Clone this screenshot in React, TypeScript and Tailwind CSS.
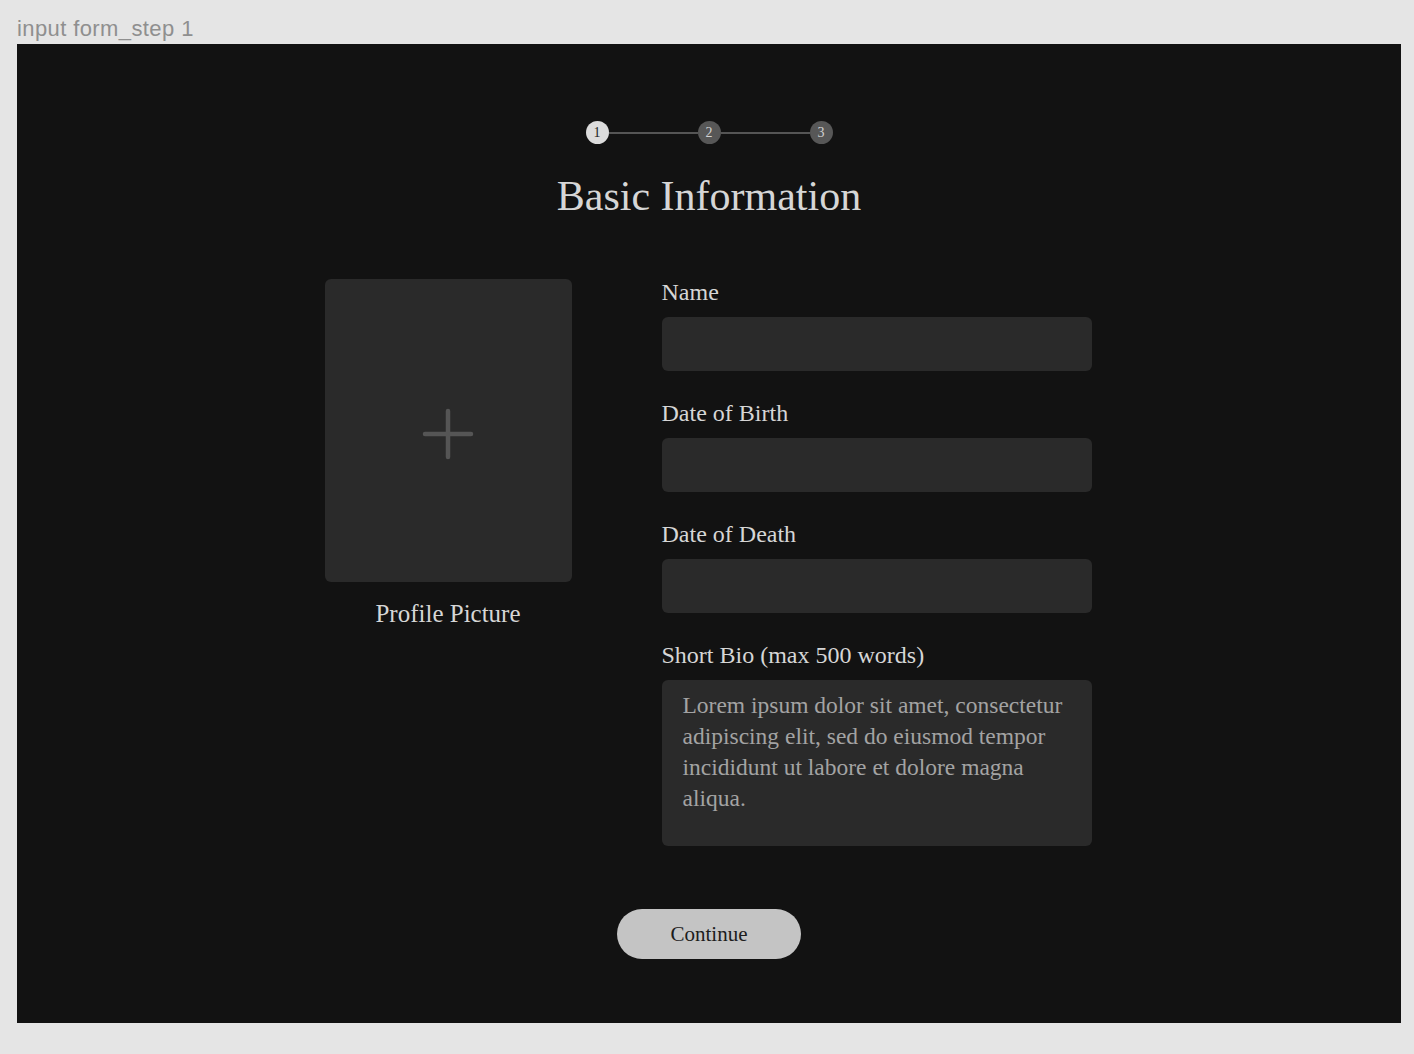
import React from "react";

const serif = { fontFamily: '"Liberation Serif", "Times New Roman", serif' };

function Step({ n, active }: { n: number; active?: boolean }) {
  return (
    <div
      className={
        "flex h-[23px] w-[23px] shrink-0 items-center justify-center rounded-full text-[14px] leading-none " +
        (active ? "bg-[#dcdcdc] text-[#1e1e1e]" : "bg-[#575757] text-[#d2d2d2]")
      }
      style={serif}
    >
      {n}
    </div>
  );
}

function Field({ label }: { label: string }) {
  return (
    <div className="flex flex-col">
      <div className="text-[24px] leading-[30px] text-[#d6d6d6]" style={serif}>
        {label}
      </div>
      <div className="mt-[10px] h-[54px] w-[430px] rounded-[6px] bg-[#2a2a2a]" />
    </div>
  );
}

export default function App() {
  return (
    <div className="min-h-[1054px] w-[1414px] bg-[#e5e5e5] pl-[17px] pt-[17px]">
      <div
        className="mb-[3px] text-[22px] leading-[24px] tracking-[0.4px] text-[#8f8f8f]"
        style={{ fontFamily: '"Liberation Sans", Arial, sans-serif' }}
      >
        input form_step 1
      </div>
      <div className="flex h-[979px] w-[1384px] flex-col items-center bg-[#121212] pt-[77px]">
        {/* stepper */}
        <div className="flex items-center">
          <Step n={1} active />
          <div className="h-[2px] w-[89px] bg-[#555555]" />
          <Step n={2} />
          <div className="h-[2px] w-[89px] bg-[#555555]" />
          <Step n={3} />
        </div>
        <h1 className="mt-[28px] text-[42px] leading-[48px] text-[#d6d6d6]" style={serif}>
          Basic Information
        </h1>

        <div className="mr-[2px] mt-[57px] flex items-start gap-[90px]">
          <div className="flex flex-col items-center pt-[2px]">
            <div className="flex h-[303px] w-[247px] items-center justify-center rounded-[6px] bg-[#2a2a2a] pt-[6px]">
              <svg width="52" height="52" viewBox="0 0 52 52">
                <path
                  d="M26 3 V49 M3 26 H49"
                  stroke="#555555"
                  strokeWidth="4.5"
                  strokeLinecap="round"
                  fill="none"
                />
              </svg>
            </div>
            <div className="mt-[17px] text-[25px] leading-[30px] text-[#d6d6d6]" style={serif}>
              Profile Picture
            </div>
          </div>

          <div className="flex flex-col gap-[27px]">
            <Field label="Name" />
            <Field label="Date of Birth" />
            <Field label="Date of Death" />
            <div className="flex flex-col">
              <div className="text-[24px] leading-[30px] text-[#d6d6d6]" style={serif}>
                Short Bio (max 500 words)
              </div>
              <div
                className="mt-[10px] h-[166px] w-[430px] rounded-[6px] bg-[#2a2a2a] pl-[21px] pt-[10px] text-[23.5px] leading-[31px] text-[#a3a3a3]"
                style={serif}
              >
                <div>Lorem ipsum dolor sit amet, consectetur</div>
                <div>adipiscing elit, sed do eiusmod tempor</div>
                <div>incididunt ut labore et dolore magna</div>
                <div>aliqua.</div>
              </div>
            </div>
          </div>
        </div>

        <button
          className="mt-[63px] flex h-[50px] w-[184px] items-center justify-center rounded-full bg-[#c4c4c4] pt-[2px] text-[21px] text-[#1c1c1c]"
          style={serif}
        >
          Continue
        </button>
      </div>
    </div>
  );
}
